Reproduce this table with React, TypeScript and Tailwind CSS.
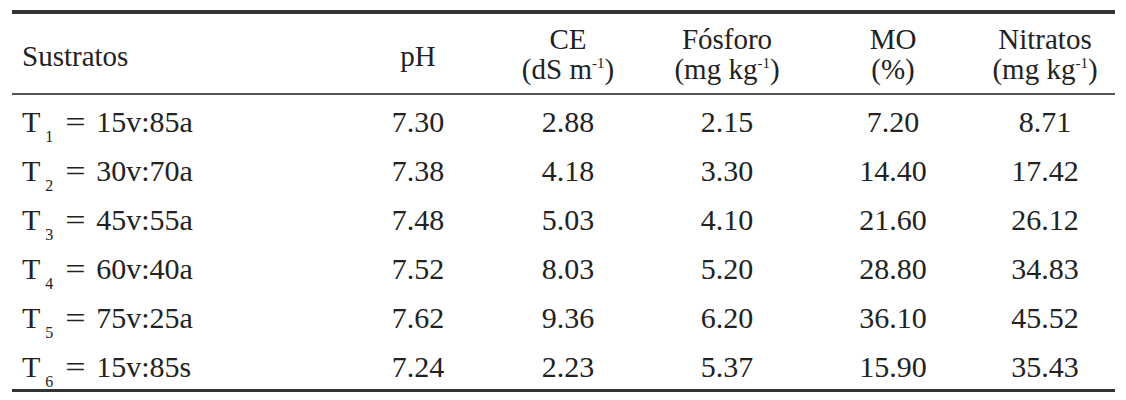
import React from "react";

type Row = {
    n: string;
    mix: string;
    ph: string;
    ce: string;
    p: string;
    mo: string;
    no3: string;
};

const rows: Row[] = [
    { n: "1", mix: "15v:85a", ph: "7.30", ce: "2.88", p: "2.15", mo: "7.20", no3: "8.71" },
    { n: "2", mix: "30v:70a", ph: "7.38", ce: "4.18", p: "3.30", mo: "14.40", no3: "17.42" },
    { n: "3", mix: "45v:55a", ph: "7.48", ce: "5.03", p: "4.10", mo: "21.60", no3: "26.12" },
    { n: "4", mix: "60v:40a", ph: "7.52", ce: "8.03", p: "5.20", mo: "28.80", no3: "34.83" },
    { n: "5", mix: "75v:25a", ph: "7.62", ce: "9.36", p: "6.20", mo: "36.10", no3: "45.52" },
    { n: "6", mix: "15v:85s", ph: "7.24", ce: "2.23", p: "5.37", mo: "15.90", no3: "35.43" },
];

const grid = "grid grid-cols-[331px_150px_150px_168px_164px_140px]";

// unidad con exponente -1
const Unit = ({ pre }: { pre: string }) => (
    <span>
        ({pre}
        <sup className="text-[15px] -top-[11px]">-1</sup>)
    </span>
);

const App = () => {
    return (
        <div className="w-[1126px] h-[400px] bg-white pt-[10px] pl-[12px] text-[#222]">
            <div className="w-[1103px] border-t-[4px] border-b-[3px] border-[#333] [font-family:'Liberation_Serif','DejaVu_Serif',serif]">
                {/* Header */}
                <div className={`${grid} h-[81px] items-center border-b-[2px] border-[#555] text-[29px] leading-[30px]`}>
                    <div className="pl-[10px] pt-[4px]">Sustratos</div>
                    <div className="text-center pt-[4px]">pH</div>
                    <div className="text-center flex flex-col items-center">
                        <span>CE</span>
                        <Unit pre="dS m" />
                    </div>
                    <div className="text-center flex flex-col items-center">
                        <span>Fósforo</span>
                        <Unit pre="mg kg" />
                    </div>
                    <div className="text-center flex flex-col items-center">
                        <span>MO</span>
                        <span>(%)</span>
                    </div>
                    <div className="text-center flex flex-col items-center">
                        <span>Nitratos</span>
                        <Unit pre="mg kg" />
                    </div>
                </div>

                {/* Body */}
                {rows.map((r) => (
                    <div key={r.n} className={`${grid} h-[49px] items-center text-[30px] leading-[49px] pt-[2px]`}>
                        <div className="pl-[10px] whitespace-nowrap">
                            T<sub className="text-[16px] top-[10px] ml-[5px] mr-[14px]">{r.n}</sub>
                            <span className="inline-block scale-x-[1.2]">=</span>
                            <span className="ml-[12px]">{r.mix}</span>
                        </div>
                        <div className="text-center">{r.ph}</div>
                        <div className="text-center">{r.ce}</div>
                        <div className="text-center">{r.p}</div>
                        <div className="text-center">{r.mo}</div>
                        <div className="text-center">{r.no3}</div>
                    </div>
                ))}
            </div>
        </div>
    );
};

export default App;
